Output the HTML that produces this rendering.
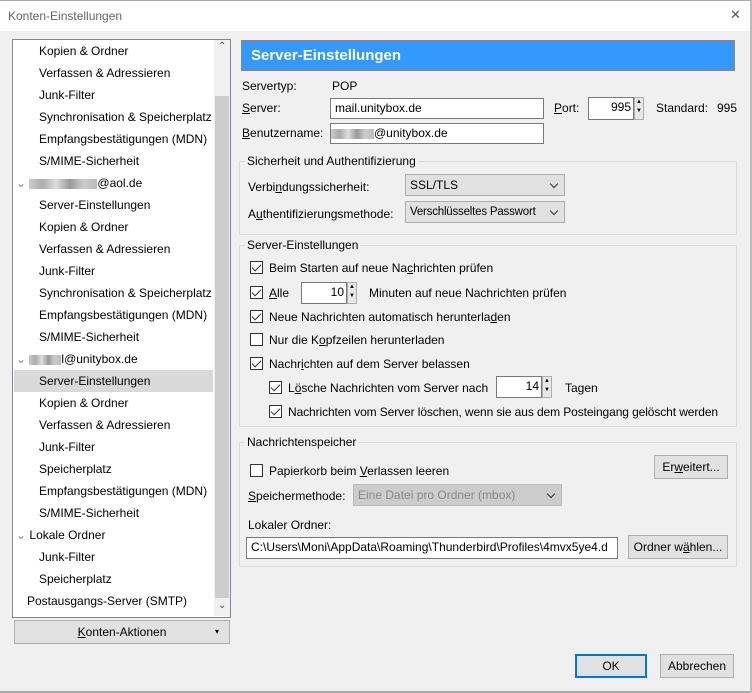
<!DOCTYPE html>
<html><head><meta charset="utf-8"><style>
*{box-sizing:border-box;margin:0;padding:0}
body{width:752px;height:693px;background:#f0f0f0;font-family:"Liberation Sans",sans-serif;font-size:12px;color:#000;position:relative;overflow:hidden}
.a{position:absolute;white-space:nowrap}
.title{left:0;top:0;width:752px;height:31px;background:#fff;border-top:1px solid #aaa}
.tree{left:12px;top:39px;width:219px;height:579px;background:#fff;border:1px solid #828790}
.sb{left:214px;top:40px;width:16px;height:576px;background:#f0f0f0}
.thumb{left:215px;top:96px;width:14px;height:502px;background:#cdcdcd}
.ti{position:absolute;height:22px;line-height:22px}
.sel{left:14px;top:370px;width:199px;height:22px;background:#d9d9d9}
.btn{position:absolute;background:#e1e1e1;border:1px solid #adadad;text-align:center}
.inp{position:absolute;background:#fff;border:1px solid #7a7a7a;height:21px;line-height:19px;padding:0 4px}
.sel2{position:absolute;background:#e1e1e1;border:1px solid #adadad;height:22px;line-height:20px;padding:0 4px}
.sel2:after{content:"";position:absolute;right:7px;top:6px;width:5px;height:5px;border-right:1px solid #333;border-bottom:1px solid #333;transform:rotate(45deg)}
.grp{position:absolute;border:1px solid #dcdcdc}
.lg{position:absolute;background:#f0f0f0;padding:0 2px}
.cb{position:absolute;width:13px;height:13px;border:1px solid #333;background:#fff}
.cb.c:after{content:"";position:absolute;left:3px;top:0px;width:4px;height:8px;border-right:1px solid #333;border-bottom:1px solid #333;transform:rotate(45deg)}
.spin{position:absolute;width:10px;height:21px;border:1px solid #adadad;background:#e8e8e8;font-size:6px;line-height:9px;text-align:center}
u{text-decoration:underline}
.blur{display:inline-block;height:10px;background:linear-gradient(90deg,#ccc,#aaa,#ddd,#999,#ccc,#bbb);vertical-align:middle}
</style></head><body>
<div class="a title"><span class="a" style="left:8px;top:8px;color:#666;font-size:12px">Konten-Einstellungen</span><span class="a" style="left:730px;top:6px;font-size:13px;color:#555">✕</span></div>
<div class="a tree"></div>
<div class="a sb"></div><div class="a thumb"></div>
<div class="a" style="left:218px;top:41px;font-size:10px;color:#555">⌃</div>
<div class="a" style="left:218px;top:600px;font-size:10px;color:#555">⌄</div>
<div class="a sel"></div>
<div class="ti" style="left:39px;top:40px">Kopien &amp; Ordner</div>
<div class="ti" style="left:39px;top:62px">Verfassen &amp; Adressieren</div>
<div class="ti" style="left:39px;top:84px">Junk-Filter</div>
<div class="ti" style="left:39px;top:106px">Synchronisation &amp; Speicherplatz</div>
<div class="ti" style="left:39px;top:128px">Empfangsbestätigungen (MDN)</div>
<div class="ti" style="left:39px;top:150px">S/MIME-Sicherheit</div>
<div class="ti" style="left:16px;top:172px"><span style="color:#888">⌄</span> <span class="blur" style="width:68px"></span>@aol.de</div>
<div class="ti" style="left:39px;top:194px">Server-Einstellungen</div>
<div class="ti" style="left:39px;top:216px">Kopien &amp; Ordner</div>
<div class="ti" style="left:39px;top:238px">Verfassen &amp; Adressieren</div>
<div class="ti" style="left:39px;top:260px">Junk-Filter</div>
<div class="ti" style="left:39px;top:282px">Synchronisation &amp; Speicherplatz</div>
<div class="ti" style="left:39px;top:304px">Empfangsbestätigungen (MDN)</div>
<div class="ti" style="left:39px;top:326px">S/MIME-Sicherheit</div>
<div class="ti" style="left:16px;top:348px"><span style="color:#888">⌄</span> <span class="blur" style="width:32px"></span>l@unitybox.de</div>
<div class="ti" style="left:39px;top:370px">Server-Einstellungen</div>
<div class="ti" style="left:39px;top:392px">Kopien &amp; Ordner</div>
<div class="ti" style="left:39px;top:414px">Verfassen &amp; Adressieren</div>
<div class="ti" style="left:39px;top:436px">Junk-Filter</div>
<div class="ti" style="left:39px;top:458px">Speicherplatz</div>
<div class="ti" style="left:39px;top:480px">Empfangsbestätigungen (MDN)</div>
<div class="ti" style="left:39px;top:502px">S/MIME-Sicherheit</div>
<div class="ti" style="left:16px;top:524px"><span style="color:#888">⌄</span> Lokale Ordner</div>
<div class="ti" style="left:39px;top:546px">Junk-Filter</div>
<div class="ti" style="left:39px;top:568px">Speicherplatz</div>
<div class="ti" style="left:27px;top:590px">Postausgangs-Server (SMTP)</div>
<div class="btn" style="left:14px;top:620px;width:216px;height:24px;line-height:22px"><u>K</u>onten-Aktionen<span style="position:absolute;right:10px;font-size:8px">▾</span></div>

<div class="a" style="left:241px;top:40px;width:494px;height:31px;background:#3399ff;border:1px solid #888"><span class="a" style="left:9px;top:6px;color:#fff;font-weight:bold;font-size:15px">Server-Einstellungen</span></div>
<div class="a" style="left:242px;top:79px">Servertyp:</div><div class="a" style="left:332px;top:79px">POP</div>
<div class="a" style="left:242px;top:101px"><u>S</u>erver:</div>
<div class="inp" style="left:330px;top:98px;width:214px">mail.unitybox.de</div>
<div class="a" style="left:554px;top:101px"><u>P</u>ort:</div>
<div class="inp" style="left:588px;top:97px;width:46px;height:23px;text-align:right;padding-right:2px">995</div>
<div class="spin" style="left:634px;top:97px;height:23px">▲<br>▼</div>
<div class="a" style="left:656px;top:101px">Standard:</div><div class="a" style="left:717px;top:101px">995</div>
<div class="a" style="left:242px;top:126px"><u>B</u>enutzername:</div>
<div class="inp" style="left:330px;top:123px;width:214px;padding-left:0"><span class="blur" style="width:43px"></span>@unitybox.de</div>

<div class="grp" style="left:239px;top:161px;width:498px;height:74px"></div>
<div class="lg a" style="left:245px;top:154px">Sicherheit und Authentifizierung</div>
<div class="a" style="left:248px;top:180px">Verbi<u>n</u>dungssicherheit:</div>
<div class="sel2" style="left:405px;top:174px;width:160px">SSL/TLS</div>
<div class="a" style="left:248px;top:207px">A<u>u</u>thentifizierungsmethode:</div>
<div class="sel2" style="left:405px;top:201px;width:160px;font-size:11.5px;letter-spacing:-0.2px">Verschlüsseltes Passwort</div>

<div class="grp" style="left:239px;top:245px;width:498px;height:182px"></div>
<div class="lg a" style="left:245px;top:238px">Server-Einstellungen</div>
<div class="cb c" style="left:250px;top:261px"></div><div class="a" style="left:269px;top:261px">Beim Starten auf neue Na<u>c</u>hrichten prüfen</div>
<div class="cb c" style="left:250px;top:286px"></div><div class="a" style="left:269px;top:286px"><u>A</u>lle</div>
<div class="inp" style="left:301px;top:282px;width:46px;height:22px;text-align:right;padding-right:2px">10</div>
<div class="spin" style="left:347px;top:282px;height:22px">▲<br>▼</div>
<div class="a" style="left:369px;top:286px">Minuten auf neue Nachrichten prüfen</div>
<div class="cb c" style="left:250px;top:310px"></div><div class="a" style="left:269px;top:310px">Neue Nachrichten automatisch herunterla<u>d</u>en</div>
<div class="cb" style="left:250px;top:333px"></div><div class="a" style="left:269px;top:333px">Nur die K<u>o</u>pfzeilen herunterladen</div>
<div class="cb c" style="left:250px;top:357px"></div><div class="a" style="left:269px;top:357px">Nachr<u>i</u>chten auf dem Server belassen</div>
<div class="cb c" style="left:269px;top:381px"></div><div class="a" style="left:288px;top:381px">L<u>ö</u>sche Nachrichten vom Server nach</div>
<div class="inp" style="left:496px;top:376px;width:46px;height:22px;text-align:right;padding-right:2px">14</div>
<div class="spin" style="left:542px;top:376px;height:22px">▲<br>▼</div>
<div class="a" style="left:565px;top:381px">Tagen</div>
<div class="cb c" style="left:269px;top:405px"></div><div class="a" style="left:288px;top:405px;letter-spacing:-0.1px">Nachrichten vom Server löschen, wenn sie aus dem Posteingang gelöscht werden</div>

<div class="grp" style="left:239px;top:442px;width:498px;height:125px"></div>
<div class="lg a" style="left:245px;top:435px">Nachrichtenspeicher</div>
<div class="cb" style="left:250px;top:464px"></div><div class="a" style="left:269px;top:464px">Papierkorb beim <u>V</u>erlassen leeren</div>
<div class="btn" style="left:654px;top:455px;width:74px;height:24px;line-height:22px">Er<u>w</u>eitert...</div>
<div class="a" style="left:248px;top:489px"><u>S</u>peichermethode:</div>
<div class="sel2" style="left:353px;top:484px;width:209px;color:#888;background:#ccc;border-color:#bbb">Eine Datei pro Ordner (mbox)</div>
<div class="a" style="left:248px;top:518px">Lokaler Ordner:</div>
<div class="inp" style="left:246px;top:537px;width:372px;height:22px;padding-left:4px;overflow:hidden">C:\Users\Moni\AppData\Roaming\Thunderbird\Profiles\4mvx5ye4.d</div>
<div class="btn" style="left:628px;top:535px;width:100px;height:24px;line-height:22px">Ordner w<u>ä</u>hlen...</div>

<div class="btn" style="left:575px;top:654px;width:72px;height:24px;line-height:20px;border:2px solid #0078d7">OK</div>
<div class="btn" style="left:660px;top:654px;width:74px;height:24px;line-height:22px">Abbrechen</div>
<div class="a" style="left:0;top:691px;width:752px;height:2px;background:#aaa"></div>
<div class="a" style="left:750px;top:0;width:2px;height:693px;background:#bbb"></div>
</body></html>
